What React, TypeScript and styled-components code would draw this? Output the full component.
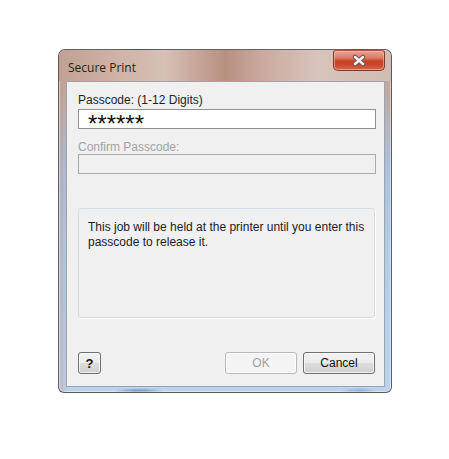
import React from "react";
import styled, { createGlobalStyle } from "styled-components";

const Global = createGlobalStyle`
  html, body { margin: 0; padding: 0; background: #ffffff; }
  body { font-family: "Liberation Sans", Arial, sans-serif; }
`;

const Page = styled.div`
  width: 449px;
  height: 459px;
  padding: 49px 0 0 58px;
  box-sizing: border-box;
`;

const Window = styled.div`
  width: 334px;
  height: 344px;
  box-sizing: border-box;
  border: 1px solid rgba(70, 60, 60, 0.75);
  border-radius: 7px 7px 6px 6px;
  overflow: hidden;
  display: flex;
  flex-direction: column;
  background:
    radial-gradient(ellipse 26px 4px at 80px 100%, rgba(60, 100, 160, 0.8), rgba(60, 100, 160, 0)),
    radial-gradient(ellipse 20px 4px at 300px 100%, rgba(60, 100, 160, 0.5), rgba(60, 100, 160, 0)),
    linear-gradient(90deg, rgba(190,150,135,0.45) 0px, rgba(190,150,135,0) 10px),
    linear-gradient(180deg, #c6a99c 0px, #c2a89e 40px, #abc0d8 110px, #b0cdea 200px, #b8d4ef 100%);
  box-shadow: inset 0 0 0 1px rgba(255,255,255,0.45);
`;

const TitleBar = styled.div`
  height: 31px;
  flex: none;
  display: flex;
  justify-content: space-between;
  align-items: flex-start;
  background: linear-gradient(
    90deg,
    #c1a194 0%,
    #cfb3a6 18%,
    #d6c0b6 32%,
    #b8907f 50%,
    #c9a79c 60%,
    #d9c4bc 78%,
    #d0bbb4 100%
  );
`;

const Title = styled.div`
  padding: 11px 0 0 9px;
  font-family: "Open Sans", "Liberation Sans", sans-serif;
  font-size: 12px;
  line-height: 14px;
  color: #2a2220;
`;

const CloseButton = styled.div`
  width: 52px;
  height: 21px;
  margin-right: 6px;
  box-sizing: border-box;
  border: 1px solid #7d3b2c;
  border-top-color: #a35c4a;
  border-radius: 3px 3px 5px 5px;
  background: linear-gradient(
    180deg,
    #e7a591 0%,
    #dd7f65 35%,
    #c9432a 52%,
    #c8442b 70%,
    #d9694e 100%
  );
  box-shadow: inset 0 0 0 1px rgba(255, 200, 180, 0.5);
  display: flex;
  align-items: center;
  justify-content: center;
`;

const Client = styled.div`
  flex: 1;
  margin: 0 6px 5px 7px;
  border: 1px solid #9aa3ae;
  background: #f0f0f0;
  padding: 11px 8px 12px 11px;
  display: flex;
  flex-direction: column;
`;

const Label = styled.div<{ $disabled?: boolean }>`
  font-size: 12px;
  line-height: 14px;
  color: ${(p) => (p.$disabled ? "#a3a3a3" : "#1e1e1e")};
  margin-top: ${(p) => (p.$disabled ? "11px" : "0")};
`;

const Field = styled.div<{ $disabled?: boolean }>`
  width: 298px;
  height: 20px;
  box-sizing: border-box;
  margin-top: ${(p) => (p.$disabled ? "0" : "2px")};
  border: 1px solid ${(p) => (p.$disabled ? "#a9acaf" : "#8e9296")};
  background: ${(p) => (p.$disabled ? "#f0f0f0" : "#ffffff")};
  padding-left: 9px;
  font-size: 24px;
  line-height: 28px;
  letter-spacing: 0;
  color: #111;
  white-space: nowrap;
`;

const Group = styled.div`
  width: 297px;
  height: 110px;
  box-sizing: border-box;
  margin-top: 34px;
  border: 1px solid #d6dde3;
  border-radius: 3px;
  box-shadow: 1px 1px 0 #ffffff;
  padding: 11px 9px;
  font-size: 12px;
  line-height: 15px;
  color: #1b1b2a;
`;

const ButtonRow = styled.div`
  margin-top: 34px;
  width: 297px;
  display: flex;
  align-items: center;
  gap: 6px;
`;

const Button = styled.div<{ $disabled?: boolean; $help?: boolean }>`
  width: ${(p) => (p.$help ? "23px" : "72px")};
  height: 22px;
  box-sizing: border-box;
  margin-right: ${(p) => (p.$help ? "auto" : "0")};
  border: 1px solid ${(p) => (p.$disabled ? "#b7babc" : "#707070")};
  border-radius: 3px;
  background: ${(p) =>
    p.$disabled
      ? "#f4f4f4"
      : "linear-gradient(180deg, #f2f2f2 0%, #ebebeb 50%, #dddddd 51%, #cfcfcf 100%)"};
  box-shadow: inset 0 0 0 1px rgba(255, 255, 255, 0.7);
  display: flex;
  align-items: center;
  justify-content: center;
  font-size: ${(p) => (p.$help ? "13px" : "12px")};
  font-weight: ${(p) => (p.$help ? 700 : 400)};
  color: ${(p) => (p.$disabled ? "#a0a0a0" : "#111111")};
`;

export default function App() {
  return (
    <>
      <Global />
      <Page>
        <Window>
          <TitleBar>
            <Title>Secure Print</Title>
            <CloseButton>
              <svg width="16" height="13" viewBox="0 0 16 13">
                <path
                  d="M4 3 L12 10 M12 3 L4 10"
                  stroke="#6a5654"
                  strokeWidth="4.5"
                  strokeLinecap="round"
                />
                <path
                  d="M4 3 L12 10 M12 3 L4 10"
                  stroke="#f4f0f0"
                  strokeWidth="2.5"
                  strokeLinecap="round"
                />
              </svg>
            </CloseButton>
          </TitleBar>
          <Client>
            <Label>Passcode: (1-12 Digits)</Label>
            <Field>******</Field>
            <Label $disabled>Confirm Passcode:</Label>
            <Field $disabled />
            <Group>
              This job will be held at the printer until you enter this
              <br />
              passcode to release it.
            </Group>
            <ButtonRow>
              <Button $help>?</Button>
              <Button $disabled>OK</Button>
              <Button>Cancel</Button>
            </ButtonRow>
          </Client>
        </Window>
      </Page>
    </>
  );
}
